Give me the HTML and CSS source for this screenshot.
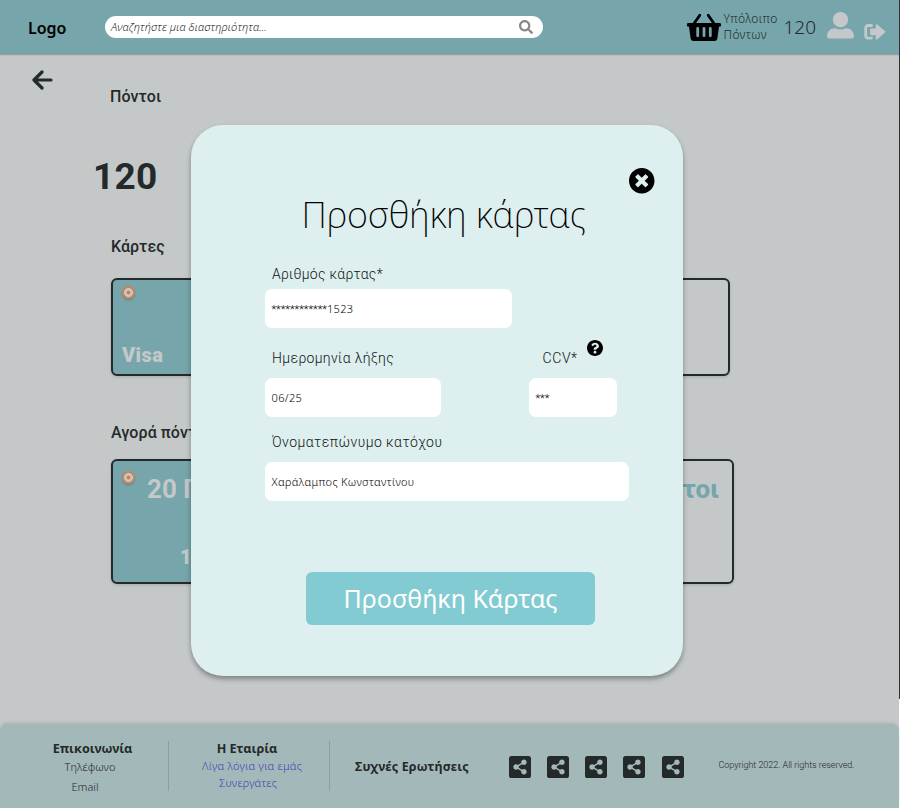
FILE: index.html
```html
<!DOCTYPE html>
<html lang="el">
<head>
<meta charset="utf-8">
<title>Πόντοι</title>
<link rel="stylesheet" href="styles.css">
</head>
<body>
<svg class="defs" aria-hidden="true">
  <symbol id="share" viewBox="0 32 448 448"><path d="M448 80v352c0 26.51-21.49 48-48 48H48c-26.51 0-48-21.49-48-48V80c0-26.51 21.49-48 48-48h352c26.51 0 48 21.49 48 48zM304 296c-14.562 0-27.823 5.561-37.783 14.671l-67.958-40.775a56.339 56.339 0 0 0 0-27.793l67.958-40.775C276.177 210.439 289.438 216 304 216c30.928 0 56-25.072 56-56s-25.072-56-56-56-56 25.072-56 56c0 4.797.605 9.453 1.74 13.897l-67.958 40.775C171.823 205.561 158.562 200 144 200c-30.928 0-56 25.072-56 56s25.072 56 56 56c14.562 0 27.823-5.561 37.783-14.671l67.958 40.775a56.088 56.088 0 0 0-1.741 13.897c0 30.928 25.072 56 56 56s56-25.072 56-56C360 321.072 334.928 296 304 296z"/></symbol>
</svg>
<div class="page">
  <header class="header">
    <div class="logo">Logo</div>
    <div class="search">
      <span class="search-text">Αναζητήστε μια διαστηριότητα...</span>
      <svg class="search-icon" viewBox="0 0 512 512"><path d="M505 442.7L405.3 343c-4.5-4.5-10.6-7-17-7H372c27.6-35.3 44-79.7 44-128C416 93.1 322.9 0 208 0S0 93.1 0 208s93.1 208 208 208c48.3 0 92.7-16.4 128-44v16.3c0 6.4 2.5 12.5 7 17l99.7 99.7c9.4 9.4 24.6 9.4 33.9 0l28.3-28.3c9.4-9.4 9.4-24.6.1-34zM208 336c-70.7 0-128-57.2-128-128 0-70.7 57.2-128 128-128 70.7 0 128 57.2 128 128 0 70.7-57.2 128-128 128z"/></svg>
    </div>
    <svg class="basket" viewBox="0 0 34 28"><path d="M12.800 2.200 7 10.500M21.200 2.200 27 10.500" fill="none" stroke="#000" stroke-width="2.800" stroke-linecap="round"/><path fill-rule="evenodd" d="M1.200 10h31.600a1.200 1.200 0 0 1 1.200 1.200v1.200a1.200 1.200 0 0 1-1.200 1.200h-.8l-1.600 12a2.700 2.700 0 0 1-2.600 2.300H6.200a2.700 2.700 0 0 1-2.600-2.300L2 13.600h-.8A1.200 1.200 0 0 1 0 12.400v-1.200A1.200 1.200 0 0 1 1.200 10zM9.300 15.300v7.500a1.400 1.400 0 0 0 2.800 0v-7.500a1.400 1.400 0 0 0-2.800 0zM15.600 15.300v7.500a1.400 1.400 0 0 0 2.800 0v-7.500a1.400 1.400 0 0 0-2.800 0zM21.900 15.300v7.500a1.400 1.400 0 0 0 2.800 0v-7.500a1.400 1.400 0 0 0-2.800 0z"/></svg>
    <div class="balance-label">Υπόλοιπο<br>Πόντων</div>
    <div class="balance">120</div>
    <svg class="user" viewBox="0 0 27 27"><circle cx="13.500" cy="7.700" r="7.600"/><path d="M0 24.500C0 19.500 3.500 16.300 8 16.300c2 .8 3.500 1.300 5.500 1.300s3.500-.5 5.500-1.300c4.500 0 8 3.200 8 8.200 0 1.100-.9 1.900-2 1.900H2c-1.100 0-2-.8-2-1.900z"/></svg>
    <svg class="signout" viewBox="0 0 22 18"><path d="M7.500 2.500H4A2.300 2.300 0 0 0 1.700 4.800v8A2.300 2.300 0 0 0 4 15.100h3.500" fill="none" stroke="#c4c8c9" stroke-width="2.800" stroke-linecap="round"/><path d="M13.200 1.500 21 8.100a1 1 0 0 1 0 1.500l-7.800 6.800c-.6.500-1.400.1-1.400-.7v-3.400H7.300c-.7 0-1.200-.5-1.200-1.200V6.600c0-.7.5-1.200 1.200-1.200h4.500V2.200c0-.8.8-1.200 1.400-.7z"/></svg>
  </header>

  <main class="main">
    <svg class="back" viewBox="0 0 22 20"><path d="M11 2 3 10l8 8M3.500 10H20" fill="none" stroke="#24292a" stroke-width="3.200" stroke-linecap="round" stroke-linejoin="round"/></svg>
    <h2 class="heading points-heading">Πόντοι</h2>
    <div class="total">120</div>
    <h2 class="heading cards-heading">Κάρτες</h2>
    <div class="row cards">
      <div class="tile visa"><i class="radio"></i><b class="visa-name">Visa</b></div>
      <div class="tile plain"></div>
    </div>
    <h2 class="heading buy-heading">Αγορά πόντων</h2>
    <div class="row packs">
      <div class="tile pack"><i class="radio"></i><b class="pack-name">20 Πόντοι</b><b class="pack-price">10€</b></div>
      <div class="tile plain"><b class="pack-name">50 Πόντοι</b></div>
    </div>
  </main>

  <footer class="footer">
    <div class="col contact"><b>Επικοινωνία</b><span class="phone">Τηλέφωνο</span><span class="email">Email</span></div>
    <div class="col company"><b>Η Εταιρία</b><a class="about">Λίγα λόγια για εμάς</a><a>Συνεργάτες</a></div>
    <b class="faq">Συχνές Ερωτήσεις</b>
    <div class="social">
      <svg><use href="#share"/></svg><svg><use href="#share"/></svg><svg><use href="#share"/></svg><svg><use href="#share"/></svg><svg><use href="#share"/></svg>
    </div>
    <span class="copyright">Copyright 2022. All rights reserved.</span>
  </footer>
</div>

<section class="modal">
  <svg class="close" viewBox="8 8 496 496"><path d="M256 8C119 8 8 119 8 256s111 248 248 248 248-111 248-248S393 8 256 8zm121.600 313.100c4.700 4.700 4.700 12.300 0 17L338 377.600c-4.700 4.700-12.300 4.700-17 0L256 312l-65.100 65.600c-4.700 4.700-12.300 4.700-17 0L134.400 338c-4.700-4.700-4.700-12.300 0-17l65.600-65-65.600-65.100c-4.700-4.700-4.700-12.300 0-17l39.600-39.600c4.700-4.700 12.300-4.700 17 0l65 65.700 65.100-65.600c4.700-4.700 12.300-4.700 17 0l39.600 39.600c4.700 4.700 4.700 12.300 0 17L312 256l65.600 65.100z"/></svg>
  <h1 class="title"><span>Προσθήκη κάρτας</span></h1>
  <div class="field number"><label>Αριθμός κάρτας*</label><div class="input"><span class="mask">************</span>1523</div></div>
  <div class="pair">
    <div class="field expiry"><label>Ημερομηνία λήξης</label><div class="input">06/25</div></div>
    <div class="field ccv">
      <label>CCV*<svg class="help" viewBox="8 8 496 496"><path d="M504 256c0 136.997-111.043 248-248 248S8 392.997 8 256C8 119.083 119.043 8 256 8s248 111.083 248 248zM262.655 90c-54.497 0-89.255 22.957-116.549 63.758-3.536 5.286-2.353 12.415 2.715 16.258l34.699 26.310c5.205 3.947 12.621 3.008 16.665-2.122 17.864-22.658 30.113-35.797 57.303-35.797 20.429 0 45.698 13.148 45.698 32.958 0 14.976-12.363 22.667-32.534 33.976C247.128 238.528 216 254.941 216 296v4c0 6.627 5.373 12 12 12h56c6.627 0 12-5.373 12-12v-1.333c0-28.462 83.186-29.647 83.186-106.667 0-58.002-60.165-102-116.531-102zM256 338c-25.365 0-46 20.635-46 46 0 25.364 20.635 46 46 46s46-20.636 46-46c0-25.365-20.635-46-46-46z"/></svg></label>
      <div class="input"><span class="mask">***</span></div>
    </div>
  </div>
  <div class="field holder"><label>Όνοματεπώνυμο κατόχου</label><div class="input">Χαράλαμπος Κωνσταντίνου</div></div>
  <button class="submit">Προσθήκη Κάρτας</button>
</section>
</body>
</html>
```
FILE: styles.css
```css
* { box-sizing: border-box; }
body { margin: 0; width: 900px; height: 808px; overflow: hidden; position: relative; background: linear-gradient(#303334, #303334) 899px 0 / 1px 699px no-repeat #fff; font-family: "Noto Sans", sans-serif; color: #24292a; }
.defs { position: absolute; width: 0; height: 0; }
.page { width: 899px; height: 808px; background: #c4c8c9; display: flex; flex-direction: column; }
svg { display: block; flex: none; }

.header { height: 55px; flex: none; display: flex; background: #76a6ab; border-bottom: 1px solid #9b9d9e; box-shadow: 0 1px 1px rgba(0,0,0,.05); }
.logo { margin: 16px 0 0 28px; width: 76.5px; font: 600 16px/24px "Noto Sans", sans-serif; color: #000; }
.search { width: 438.500px; height: 22px; margin-top: 16px; border-radius: 11px; background: #fff; display: flex; align-items: center; justify-content: space-between; padding: 0 10px 0 6.500px; }
.search-text { font: italic 300 11px/22px "Open Sans", sans-serif; letter-spacing: .1px; color: #000; }
.search-icon { width: 14px; height: 14px; fill: #888; }
.basket { width: 34px; height: 28px; margin: 13px 0 0 144px; }
.balance-label { margin: 11px 0 0 2.5px; width: 60px; font: 300 12px/16px "Noto Sans", sans-serif; letter-spacing: .35px; }
.balance { margin: 15px 0 0 0; width: 43px; font: 300 19px/25px "Noto Sans", sans-serif; }
.user { width: 27px; height: 27px; margin: 12px 0 0 .5px; fill: #c4c8c9; }
.signout { width: 22px; height: 18px; margin: 23px 0 0 10px; fill: #c4c8c9; }

.main { flex: 1; display: flex; flex-direction: column; align-items: flex-start; }
.back { width: 22px; height: 20px; margin: 15px 0 0 31px; }
.heading { margin: 0 0 0 111px; font: 500 16px/20px Roboto, sans-serif; letter-spacing: .08px; }
.points-heading { margin-top: -3px; margin-left: 110px; }
.total { margin: 46px 0 0 93px; font: 700 37px/48px Roboto, sans-serif; letter-spacing: .3px; }
.cards-heading { margin-top: 36px; }
.row { display: flex; justify-content: space-between; margin-left: 111px; }
.cards { width: 619px; height: 98px; margin-top: 21px; }
.tile { border: 2px solid #24292a; border-radius: 6px; box-shadow: 0 1px 3px rgba(0,0,0,.15); width: 180px; display: flex; flex-direction: column; color: #c4c8c9; }
.visa, .pack { background: #76a6ab; }
.radio { width: 13px; height: 13px; margin: 6px 0 0 9px; border-radius: 50%; background: radial-gradient(circle closest-side, #cf8254 0 1.700px, #c4c8c9 2.300px 4.100px, #cf8254 4.700px); box-shadow: 0 1px 2px rgba(0,0,0,.25); flex: none; }
.visa-name { margin: 37px 0 0 9px; font: 900 20px/26px Roboto, sans-serif; letter-spacing: .4px; padding-top: 6px; }
.buy-heading { margin-top: 47px; }
.packs { width: 623px; height: 125px; margin-top: 16px; }
.pack .radio { margin-top: 10px; }
.pack-name { font: 700 26px/30px Roboto, sans-serif; margin: -10px 0 0 34px; }
.pack-price { font: 900 20px/24px Roboto, sans-serif; margin: 41px 0 0 67px; }
.plain { align-items: flex-end; }
.plain .pack-name { color: #76a6ab; margin: 13px 13px 0 0; font-weight: 800; }

.footer { height: 84px; flex: none; display: flex; background: #a3b8b9; border-radius: 7px 7px 0 0; box-shadow: 0 -1px 3px rgba(0,0,0,.12); }
.col { display: flex; flex-direction: column; align-items: center; height: 50px; margin-top: 17px; border-right: 1px solid #959b9b; font: 300 11px/20px "Noto Sans", sans-serif; white-space: nowrap; }
.col b { font: 700 12.600px/16px "Noto Sans", sans-serif; }
.contact { width: 169px; padding-left: 17px; }
.phone { margin-right: 5px; letter-spacing: .1px; }
.email { margin-right: 15px; }
.company { width: 161px; line-height: 17px; padding-right: 4px; letter-spacing: .25px; }
.company b { letter-spacing: 0; }
.company a { color: #4340b8; }
.about { margin-left: 10px; }
.company a + a { margin-left: 2px; }
.faq { margin: 34px 0 0 25px; width: 154px; font: 700 12.500px/17px "Noto Sans", sans-serif; letter-spacing: .15px; }
.social { display: flex; justify-content: space-between; margin: 32px 35px 0 0; width: 174.500px; }
.social svg { width: 22px; height: 22px; fill: #24292a; }
.copyright { margin-top: 34px; font: 300 9px/14px Roboto, sans-serif; white-space: nowrap; letter-spacing: -.03px; }

.modal { position: absolute; left: 191px; top: 125px; width: 492px; height: 551px; border-radius: 32px; background: #ddefee; box-shadow: 0 3px 5px rgba(0,0,0,.35); padding: 43px 0 0 74px; display: flex; flex-direction: column; align-items: flex-start; color: #000; }
.close { width: 25.500px; height: 25.500px; margin-left: 364px; margin-bottom: -1.500px; }
.title { margin: 0; width: 357px; height: 47px; font: 200 36px/46px "Noto Sans", sans-serif; letter-spacing: -.2px; text-align: center; white-space: nowrap; }
.field label { display: flex; height: 20px; padding-left: 7px; font: 300 14px/20px Roboto, sans-serif; letter-spacing: .35px; color: #101414; white-space: nowrap; }
.input { height: 39px; margin-top: 5px; background: #fff; border-radius: 7px; padding-left: 6.500px; font: 350 11px/39px "Noto Sans", sans-serif; letter-spacing: .35px; }
.mask { font: 300 11px/1 Roboto, sans-serif; letter-spacing: -.05px; }
.number { margin-top: 25px; width: 247px; }
.number label { letter-spacing: .28px; }
.pair { display: flex; justify-content: space-between; width: 352px; margin-top: 20px; }
.pair .input { margin-top: 10px; }
.expiry { width: 176px; }
.ccv { width: 88px; }
.ccv label { padding-left: 13.500px; letter-spacing: .6px; }
.help { width: 16px; height: 16px; margin: -8px 0 0 9px; }
.holder { width: 364px; margin-top: 15px; }
.holder label { letter-spacing: .45px; }
.holder .input { margin-top: 10px; }
.submit { margin: 71px 0 0 41px; width: 289px; height: 53px; border: 0; border-radius: 6px; background: #82cbd2; color: #fff; font: 400 25px/53px "Noto Sans", sans-serif; padding: 0; }
```
